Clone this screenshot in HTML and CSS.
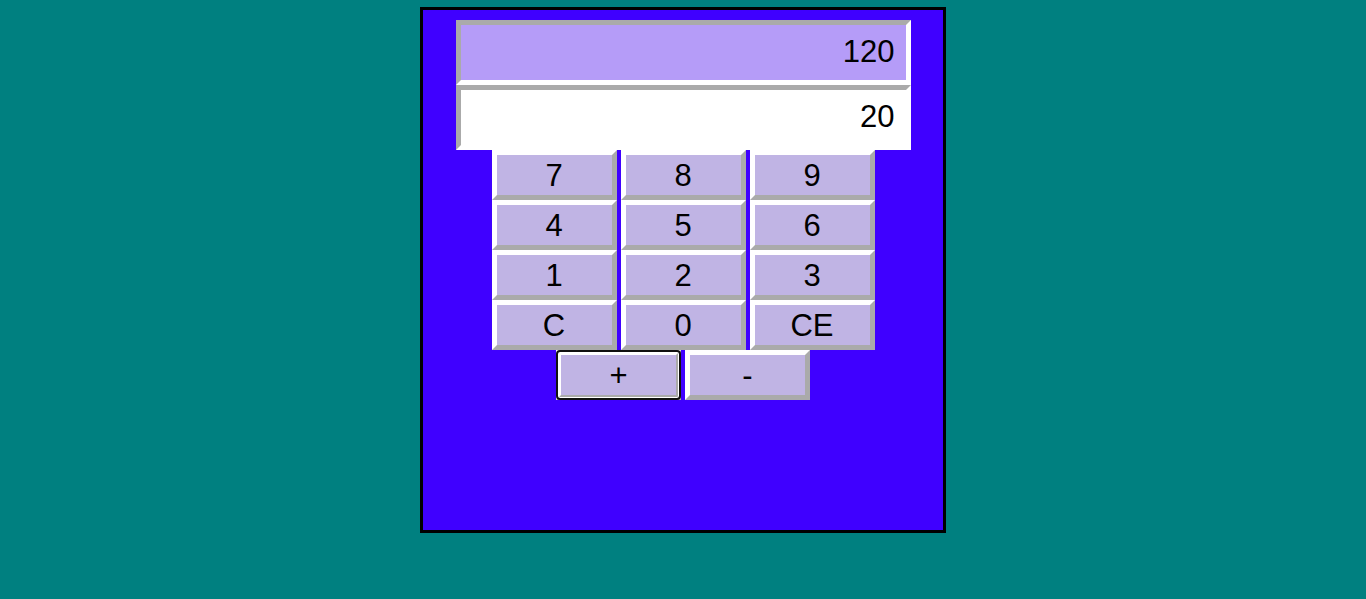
FILE: index.html
```html
<!DOCTYPE html>
<html lang="en">
<head>
<meta charset="utf-8">
<title>Calculator</title>
<link rel="stylesheet" href="styles.css">
</head>
<body>
<div class="calc">
  <div class="display display-total">120</div>
  <div class="display display-entry">20</div>
  <div class="keypad">
    <button class="key">7</button>
    <button class="key">8</button>
    <button class="key">9</button>
    <button class="key">4</button>
    <button class="key">5</button>
    <button class="key">6</button>
    <button class="key">1</button>
    <button class="key">2</button>
    <button class="key">3</button>
    <button class="key">C</button>
    <button class="key">0</button>
    <button class="key">CE</button>
  </div>
  <div class="ops">
    <button class="key key-focused">+</button>
    <button class="key">-</button>
  </div>
</div>
</body>
</html>
```
FILE: styles.css
```css
html, body {
  margin: 0;
  padding: 0;
}
body {
  background: #008080;
  padding-top: 7px;
  font-family: "Liberation Sans", Arial, sans-serif;
}
.calc {
  width: 520px;
  height: 510px;
  margin: 0 auto;
  border: 3px solid #000;
  background: #3f00ff;
  padding-top: 10px;
  box-sizing: content-box;
  display: flex;
  flex-direction: column;
  align-items: center;
}
.calc > * {
  flex: none;
}
.display {
  width: 455px;
  height: 65px;
  box-sizing: border-box;
  border: 5px solid;
  border-color: #aaaaaa #ffffff #ffffff #aaaaaa;
  display: flex;
  align-items: center;
  justify-content: flex-end;
  padding: 0 11px 2px 0;
  font-size: 31px;
  color: #000;
}
.display-total {
  background: #b59cf8;
}
.display-entry {
  background: #ffffff;
}
.keypad {
  display: grid;
  grid-template-columns: repeat(3, 125px);
  column-gap: 4px;
  row-gap: 0;
}
.ops {
  display: flex;
  gap: 4px;
}
.key {
  width: 125px;
  height: 50px;
  box-sizing: border-box;
  margin: 0;
  padding: 0;
  border: 5px solid;
  border-color: #ffffff #aaaaaa #aaaaaa #ffffff;
  background: #c0b4e4;
  font-family: "Liberation Sans", Arial, sans-serif;
  font-size: 31px;
  color: #000;
  line-height: 1;
  position: relative;
}
.key-focused::after {
  content: "";
  position: absolute;
  inset: -5px;
  border: 2px solid #101010;
  border-radius: 4px;
  box-shadow: inset 0 0 0 1px #ffffff;
  pointer-events: none;
}
```
